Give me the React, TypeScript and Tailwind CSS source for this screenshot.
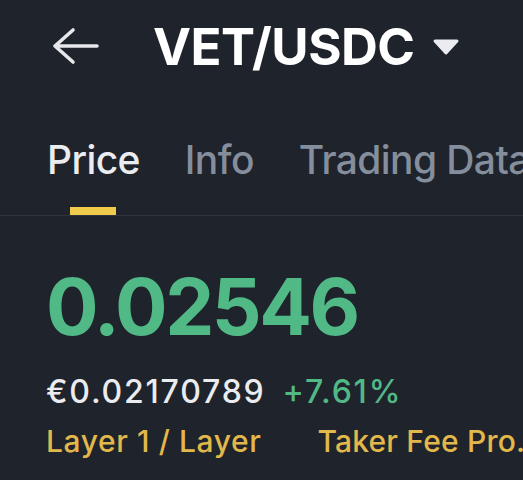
export default function App() {
  return (
    <div className="h-[480px] w-[523px] overflow-hidden bg-[#1f232b] font-['Inter',sans-serif]">
      {/* header */}
      <div className="flex h-[92px] items-center pl-[52px]">
        <svg width="48" height="38" viewBox="0 0 48 38" fill="none" className="shrink-0">
          <path
            d="M3 19H45M21 3L3 19L21 35"
            stroke="#e6e8ea"
            strokeWidth="3.6"
            strokeLinecap="round"
            strokeLinejoin="round"
          />
        </svg>
        <h1 className="ml-[53px] text-[51px] font-bold leading-none tracking-[-0.5px] text-white">
          VET/USDC
        </h1>
        <svg width="28" height="18" viewBox="0 0 28 18" className="ml-[17px] mt-[2px] shrink-0">
          <path d="M3 3H25L14 15Z" fill="#eaecef" stroke="#eaecef" strokeWidth="3" strokeLinejoin="round" />
        </svg>
      </div>

      {/* tabs */}
      <div className="relative mt-[36px] flex h-[88px] gap-[45px] whitespace-nowrap border-b border-[#2e333c] pl-[47px] pt-[12px] text-[39px] font-medium leading-none tracking-[-0.6px]">
        <div className="relative flex flex-col items-center">
          <span className="text-[#eaecef]">Price</span>
          <span className="absolute bottom-0 h-[8px] w-[46px] bg-[#f0ca4a]" />
        </div>
        <span className="text-[#848e9c]">Info</span>
        <span className="text-[#848e9c]">Trading Data</span>
      </div>

      {/* price */}
      <div className="pl-[46px] pt-[52px]">
        <div className="text-[78px] font-bold leading-none tracking-[-2.5px] text-[#51b986]">0.02546</div>
        <div className="mt-[30px] flex items-baseline gap-[17px] text-[32px] font-medium leading-none tracking-[1.8px]">
          <span className="text-[#eaecef]">€0.02170789</span>
          <span className="text-[#51b986]">+7.61%</span>
        </div>
        <div className="mt-[18px] flex items-center whitespace-nowrap text-[30px] font-medium leading-none tracking-[0.6px] text-[#e2b84b]">
          <span>Layer 1 / Layer</span>
          <span className="ml-[38px] mr-[18px] h-[12px] w-[2px] bg-[#4a505a]" />
          <span className="tracking-[0.2px]">Taker Fee Pro.</span>
        </div>
      </div>
    </div>
  )
}
